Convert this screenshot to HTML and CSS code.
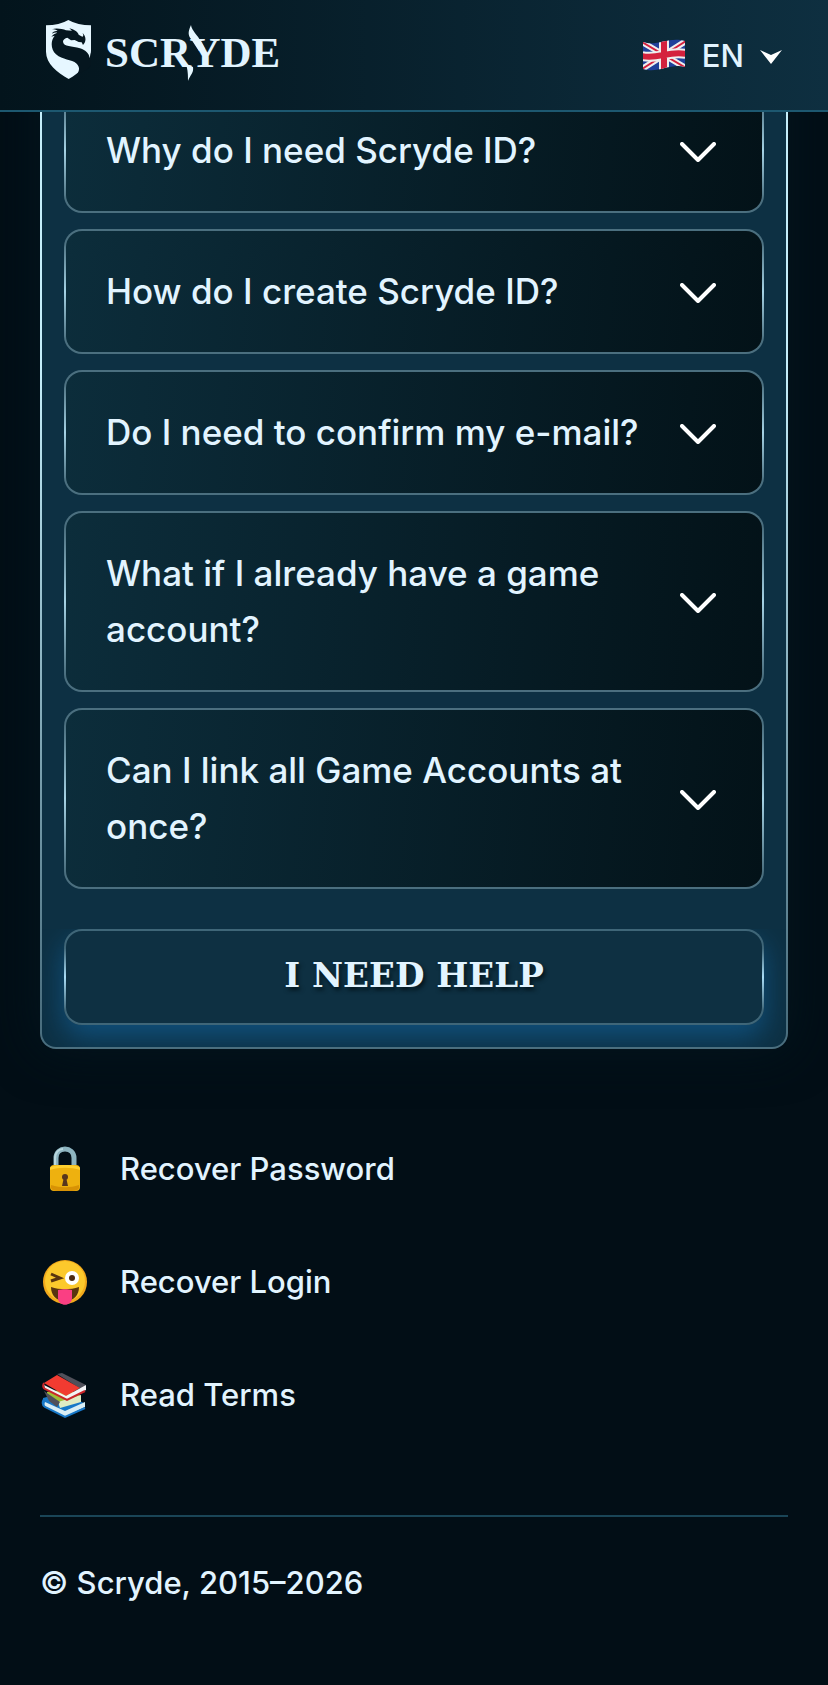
FILE: index.html
```
<!DOCTYPE html>
<html lang="en">

<head>
    <meta charset="UTF-8">
    <meta name="viewport" content="width=device-width, initial-scale=1.0">
    <link rel="stylesheet" href="styles.css">
    <title>Scryde</title>
</head>

<body>
    <header class="header">
        <a class="logo" href="#">
            <svg class="logo-shield" viewBox="48 57 135 177">
                <path fill="#e6f7ff" d="M48 73Q88 73 115 57Q143 73 183 73V150C183 188 150 214 116 234C82 214 48 188 48 152Z"/>
                <path fill="#05161f" d="M66 85C78 80 98 84 108 88L126 89L118 82C132 85 143 92 146 101L154 106L158 107C161 104 160 100 157 95C166 103 169 115 164 125L159 132L155 124L146 123L134 117L123 118L112 110C105 111 99 116 99 122C101 138 126 134 150 142C168 148 177 157 179 172L184 150V192C172 206 160 213 142 219C149 207 149 197 140 188C124 174 98 178 78 160C62 145 61 120 74 104L64 107C68 101 75 97 82 95C76 93 71 95 66 98C68 92 75 89 83 90C78 86 72 85 66 85Z"/>
            </svg>
            <span class="logo-name">SCRYDE</span>
            <svg class="logo-blade" viewBox="0 0 20 56">
                <path fill="#e6f7ff" d="M5 0C6 7 13 10 19 24L13 26L5 14C1 9 3 5 5 0ZM0 39L7 42C8 48 4 50 2 56C2 50 2 46 0 39Z"/>
            </svg>
        </a>
        <button class="lang">
            <svg class="flag" viewBox="0 0 44 32">
                <clipPath id="flag-shape">
                    <path d="M1 3C15 8 27-3 43 2V28C28 24 16 35 1 30Z"/>
                </clipPath>
                <g clip-path="url(#flag-shape)">
                    <path fill="#20409a" d="M0 0H44V32H0Z"/>
                    <path stroke="#eee" stroke-width="6" d="M0 3L44 29M0 30L44 2"/>
                    <path stroke="#d4213d" stroke-width="2" d="M0 3L44 29M0 30L44 2"/>
                    <path fill="none" stroke="#eee" stroke-width="10" d="M22 0V32M0 17C15 21 28 11 44 15"/>
                    <path fill="none" stroke="#d4213d" stroke-width="6" d="M22 0V32M0 17C15 21 28 11 44 15"/>
                </g>
            </svg>
            <span>EN</span>
            <svg class="lang-arrow" viewBox="0 0 22 14">
                <path fill="#fff" d="M0 0L11 5L22 0L11 14Z"/>
            </svg>
        </button>
    </header>

    <main class="page">
        <section class="panel">
            <div class="faq">
                <button class="question">
                    <span>Why do I need Scryde ID?</span>
                    <svg class="chevron" viewBox="0 0 36 20"><path d="M2 2L18 18L34 2"/></svg>
                </button>
                <button class="question">
                    <span>How do I create Scryde ID?</span>
                    <svg class="chevron" viewBox="0 0 36 20"><path d="M2 2L18 18L34 2"/></svg>
                </button>
                <button class="question">
                    <span>Do I need to confirm my e-mail?</span>
                    <svg class="chevron" viewBox="0 0 36 20"><path d="M2 2L18 18L34 2"/></svg>
                </button>
                <button class="question">
                    <span>What if I already have a game account?</span>
                    <svg class="chevron" viewBox="0 0 36 20"><path d="M2 2L18 18L34 2"/></svg>
                </button>
                <button class="question">
                    <span>Can I link all Game Accounts at once?</span>
                    <svg class="chevron" viewBox="0 0 36 20"><path d="M2 2L18 18L34 2"/></svg>
                </button>
            </div>
            <button class="help">I NEED HELP</button>
        </section>

        <nav class="links">
            <a href="#">
                <svg class="link-icon" viewBox="0 0 48 48">
                    <path fill="none" stroke="#8db4c0" stroke-width="5" d="M16 25V13C16 1 34 1 34 13V25"/>
                    <path fill="none" stroke="#b9d8df" stroke-width="2" d="M15 23V14C15 7 19 4 23 4"/>
                    <rect x="10" y="20" width="30" height="26" rx="4" fill="#eeb10f"/>
                    <path fill="#ffd02f" d="M10 23C10 19 40 19 40 23V25C31 22 19 22 10 25Z"/>
                    <path fill="#d89205" d="M11 40C21 43 30 43 39 40C40 46 36 46 25 46C14 46 10 46 11 40Z"/>
                    <circle cx="25" cy="32" r="3" fill="#58361d"/>
                    <path fill="#58361d" d="M24 32H26L28 41H22Z"/>
                </svg>
                Recover Password
            </a>
            <a href="#">
                <svg class="link-icon" viewBox="0 0 48 48">
                    <circle cx="25" cy="24" r="22" fill="#f2a91c"/>
                    <circle cx="25" cy="23" r="20" fill="#fcc92c"/>
                    <path fill="none" stroke="#59340f" stroke-width="3" d="M11 16L20 20L11 23"/>
                    <circle cx="32" cy="20" r="7" fill="#fff"/>
                    <circle cx="32" cy="20" r="3" fill="#4d2b12"/>
                    <path fill="#59340f" d="M11 29C20 32 30 32 39 29C39 37 34 43 25 43C16 43 11 37 11 29Z"/>
                    <path fill="#fa3f83" d="M18 32C22 31 28 31 32 32V40C32 49 18 49 18 40Z"/>
                </svg>
                Recover Login
            </a>
            <a href="#">
                <svg class="link-icon" viewBox="0 0 48 48">
                    <path fill="#1878c8" d="M3 27L23 22L44 32L25 43L3 33Z"/>
                    <path fill="#d9eef5" d="M5 31L25 40L45 31V36L25 46L4 35Z"/>
                    <path fill="none" stroke="#1878c8" stroke-width="2" d="M4 28Q1 33 5 36L25 46L45 37"/>
                    <path fill="#9fbd35" d="M7 21L26 18L41 25L23 33L7 26Z"/>
                    <path fill="#e0ecc4" d="M18 31L41 24V31L20 37Z"/>
                    <path fill="#50505a" d="M4 20L20 31L17 36L9 30Z"/>
                    <path fill="#50505a" d="M17 3L22 2L46 14L41 18Z"/>
                    <path fill="#f23b31" d="M4 12L17 4L40 17L26 25Z"/>
                    <path fill="#f4f4f6" d="M4 14L26 25L46 14V19L27 29L5 18Z"/>
                    <path fill="none" stroke="#c9252a" stroke-width="2" d="M4 12Q2 16 5 18L27 29L45 20"/>
                </svg>
                Read Terms
            </a>
        </nav>

        <footer class="footer">© Scryde, 2015–2026</footer>
    </main>
</body>

</html>
```
FILE: styles.css
```
* {
    margin: 0;
    padding: 0;
    box-sizing: border-box;
}

body {
    min-height: 100vh;
    background: #020e16;
    color: #e2f4ff;
    font-family: Inter, "Noto Sans", sans-serif;
    font-weight: 500;
}

button {
    font: inherit;
    color: inherit;
    cursor: pointer;
}

a {
    color: inherit;
    text-decoration: none;
}

.header {
    position: fixed;
    top: 0;
    left: 0;
    right: 0;
    z-index: 1;
    height: 112px;
    padding: 0 46px;
    display: flex;
    align-items: center;
    justify-content: space-between;
    background: linear-gradient(90deg, #03141c, #0e2f40);
    border-bottom: 2px solid #1d5870;
}

.logo {
    position: relative;
    display: flex;
    align-items: center;
    gap: 14px;
}

.logo-shield {
    width: 45px;
    height: 59px;
    margin-bottom: 12px;
}

.logo-name {
    margin-bottom: 4px;
    font-family: "Liberation Serif", serif;
    font-size: 43px;
    font-weight: bold;
    line-height: 60px;
}

/* long strokes of the Y */
.logo-blade {
    position: absolute;
    top: 5px;
    left: 140px;
    width: 20px;
    height: 56px;
}

.lang {
    display: flex;
    align-items: center;
    gap: 16px;
    border: none;
    background: none;
    font-size: 31px;
}

.flag {
    width: 44px;
    height: 32px;
}

.lang-arrow {
    width: 22px;
    height: 14px;
    margin-top: 4px;
}

.page {
    padding: 0 40px;
}

.panel {
    padding: 86px 22px 22px;
    border: 2px solid transparent;
    border-radius: 16px;
    background:
        linear-gradient(#0d3043, #0d3043) padding-box,
        linear-gradient(#c5eefa 0%, #c5eefa 35%, #4b6f7f 97%) border-box;
    box-shadow: 0 0 50px #03161f;
}

.faq {
    display: flex;
    flex-direction: column;
    gap: 16px;
}

.question {
    display: flex;
    align-items: center;
    justify-content: space-between;
    gap: 36px;
    padding: 32px 46px 33px 40px;
    border: 2px solid transparent;
    border-radius: 18px;
    background:
        linear-gradient(95deg, #0c2d3b, #031218) padding-box,
        linear-gradient(#4b6f7f 10%, #a5d2e4 50%, #4b6f7f 90%) border-box;
    font-size: 35px;
    line-height: 56px;
    text-align: left;
}

.chevron {
    flex: none;
    width: 36px;
    height: 20px;
    margin-top: 4px;
    fill: none;
    stroke: #fff;
    stroke-width: 4;
    stroke-linecap: round;
    stroke-linejoin: round;
}

.help {
    display: block;
    width: 100%;
    height: 96px;
    margin-top: 40px;
    padding-bottom: 4px;
    border: 2px solid transparent;
    border-radius: 18px;
    background:
        linear-gradient(#0e3042, #0e3042) padding-box,
        linear-gradient(#3f6678 20%, #a9dcf5 50%, #3f6678 85%) border-box;
    box-shadow: 0 12px 28px #10507c;
    clip-path: inset(0 -22px -22px);
    font-family: "DejaVu Serif", serif;
    font-size: 34px;
    font-weight: bold;
    text-shadow: 2px 3px 4px #03141c;
}

.links {
    display: flex;
    flex-direction: column;
    gap: 65px;
    padding: 96px 0;
    font-size: 31px;
    line-height: 48px;
}

.links a {
    display: flex;
    align-items: center;
    gap: 32px;
}

.link-icon {
    width: 48px;
    height: 48px;
}

.footer {
    padding: 42px 0 80px;
    border-top: 2px solid #1a4557;
    font-size: 31px;
    line-height: 48px;
}
```
